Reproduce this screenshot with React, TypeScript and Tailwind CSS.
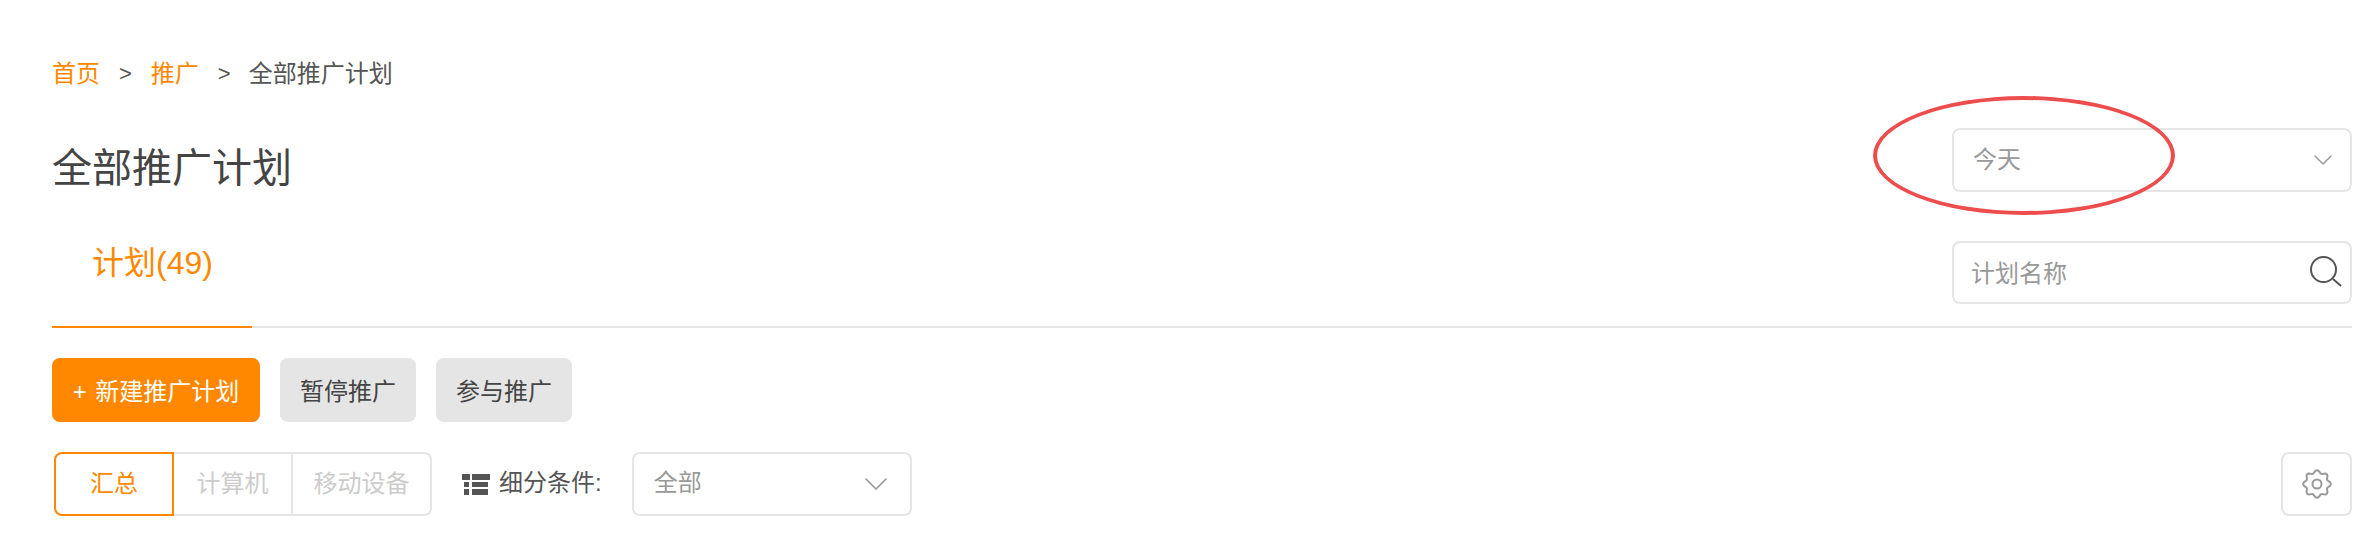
import { ChevronDown } from "lucide-react";

const font = "font-['Liberation_Sans','Noto_Sans_CJK_SC',sans-serif]";

// wavy cog outline, eight lobes
const cogPoints: string[] = [];
for (let i = 0; i < 96; i++) {
  const a = (i / 96) * Math.PI * 2;
  const r = 12.4 + 1.4 * Math.cos(a * 8);
  cogPoints.push(`${(15 + r * Math.sin(a)).toFixed(2)},${(15 - r * Math.cos(a)).toFixed(2)}`);
}

function Crumbs() {
  return (
    <div className="flex items-center shrink-0 h-[34px] mt-[2px] text-[24px] leading-[34px] text-[#555]">
      <span className="text-[#ff8800]">首页</span>
      <span className="mx-[19px] text-[22px]">&gt;</span>
      <span className="text-[#ff8800]">推广</span>
      <span className="ml-[19px] mr-[18px] text-[22px]">&gt;</span>
      <span>全部推广计划</span>
    </div>
  );
}

export default function App() {
  return (
    <div className={`${font} relative w-[2357px] h-[542px] bg-white overflow-hidden pl-[52px] pr-[5px] pt-[55px]`}>
      {/* red marker ring drawn over the date select */}
      <div className="absolute left-[1873px] top-[96px] w-[302px] h-[119px] rounded-[50%] border-[4px] border-[#ee4d4d] z-10" />

      <div className="flex justify-between h-[273px] border-b-2 border-[#e5e5e5]">
        <div className="flex flex-col">
          <Crumbs />
          <h1 className="shrink-0 mt-[49px] text-[40px] leading-[56px] font-normal text-[#444]">全部推广计划</h1>
          <div className="shrink-0 mt-[44px] w-[200px] h-[88px] border-b-2 border-[#ff8800] pl-[40px] text-[32px] leading-[46px] text-[#ff8800]">
            计划(49)
          </div>
        </div>

        <div className="flex flex-col w-[400px] pt-[73px] gap-[49px]">
          <div className="flex items-center justify-between h-[64px] pl-[19px] pr-[11px] border-2 border-[#e5e5e5] rounded-[8px] text-[24px] text-[#999]">
            <span>今天</span>
            <ChevronDown size={32} strokeWidth={1.1} className="text-[#999]" />
          </div>
          <div className="flex items-center justify-between h-[63px] pl-[17px] pr-[8px] border-2 border-[#e5e5e5] rounded-[8px] text-[24px] text-[#999]">
            <span className="pt-[2px]">计划名称</span>
            <svg width="34" height="34" viewBox="0 0 34 34" fill="none" stroke="#555" strokeWidth="2">
              <circle cx="15.5" cy="13.5" r="12.5" />
              <path d="M25 23 L33 30" />
            </svg>
          </div>
        </div>
      </div>

      <div className="flex gap-[20px] mt-[30px] text-[24px]">
        <button className="w-[208px] h-[64px] pt-[3px] rounded-[8px] bg-[#ff8800] text-white">
          <span className="mr-[2px]">+</span> 新建推广计划
        </button>
        <button className="w-[136px] h-[64px] pt-[3px] rounded-[8px] bg-[#e5e5e5] text-[#444]">暂停推广</button>
        <button className="w-[136px] h-[64px] pt-[3px] rounded-[8px] bg-[#e5e5e5] text-[#444]">参与推广</button>
      </div>

      <div className="flex items-center mt-[30px] h-[64px] text-[24px]">
        <div className="flex h-[64px] ml-[2px]">
          <div className="flex items-center justify-center w-[120px] border-2 border-[#ff8800] rounded-l-[8px] text-[#ff8800]">汇总</div>
          <div className="flex items-center justify-center w-[119px] border-y-2 border-r-2 border-[#e5e5e5] text-[#ccc]">计算机</div>
          <div className="flex items-center justify-center w-[139px] border-y-2 border-r-2 border-[#e5e5e5] rounded-r-[8px] text-[#ccc]">移动设备</div>
        </div>
        <div className="flex items-center ml-[30px] text-[#555]">
          <svg width="28" height="21" viewBox="0 0 28 21" fill="#555">
            <rect x="0" y="0" width="8" height="6" />
            <rect x="10" y="0" width="18" height="6" />
            <rect x="2" y="8" width="5" height="5" />
            <rect x="10" y="8" width="16" height="5" />
            <rect x="2" y="15" width="5" height="6" />
            <rect x="10" y="15" width="16" height="6" />
          </svg>
          <span className="ml-[9px] -mt-[2px]">细分条件:</span>
        </div>
        <div className="flex items-center justify-between ml-[30px] w-[280px] h-[64px] pl-[20px] pr-[14px] border-2 border-[#e5e5e5] rounded-[8px] text-[#999]">
          <span className="-mt-[2px]">全部</span>
          <ChevronDown size={40} strokeWidth={1} className="text-[#999]" />
        </div>
        <div className="flex items-center justify-center ml-auto w-[71px] h-[64px] border-2 border-[#e5e5e5] rounded-[8px]">
          <svg width="30" height="30" viewBox="0 0 30 30" fill="none" stroke="#999" strokeWidth="2">
            <polygon points={cogPoints.join(" ")} />
            <circle cx="15" cy="15" r="4.5" />
          </svg>
        </div>
      </div>
    </div>
  );
}
